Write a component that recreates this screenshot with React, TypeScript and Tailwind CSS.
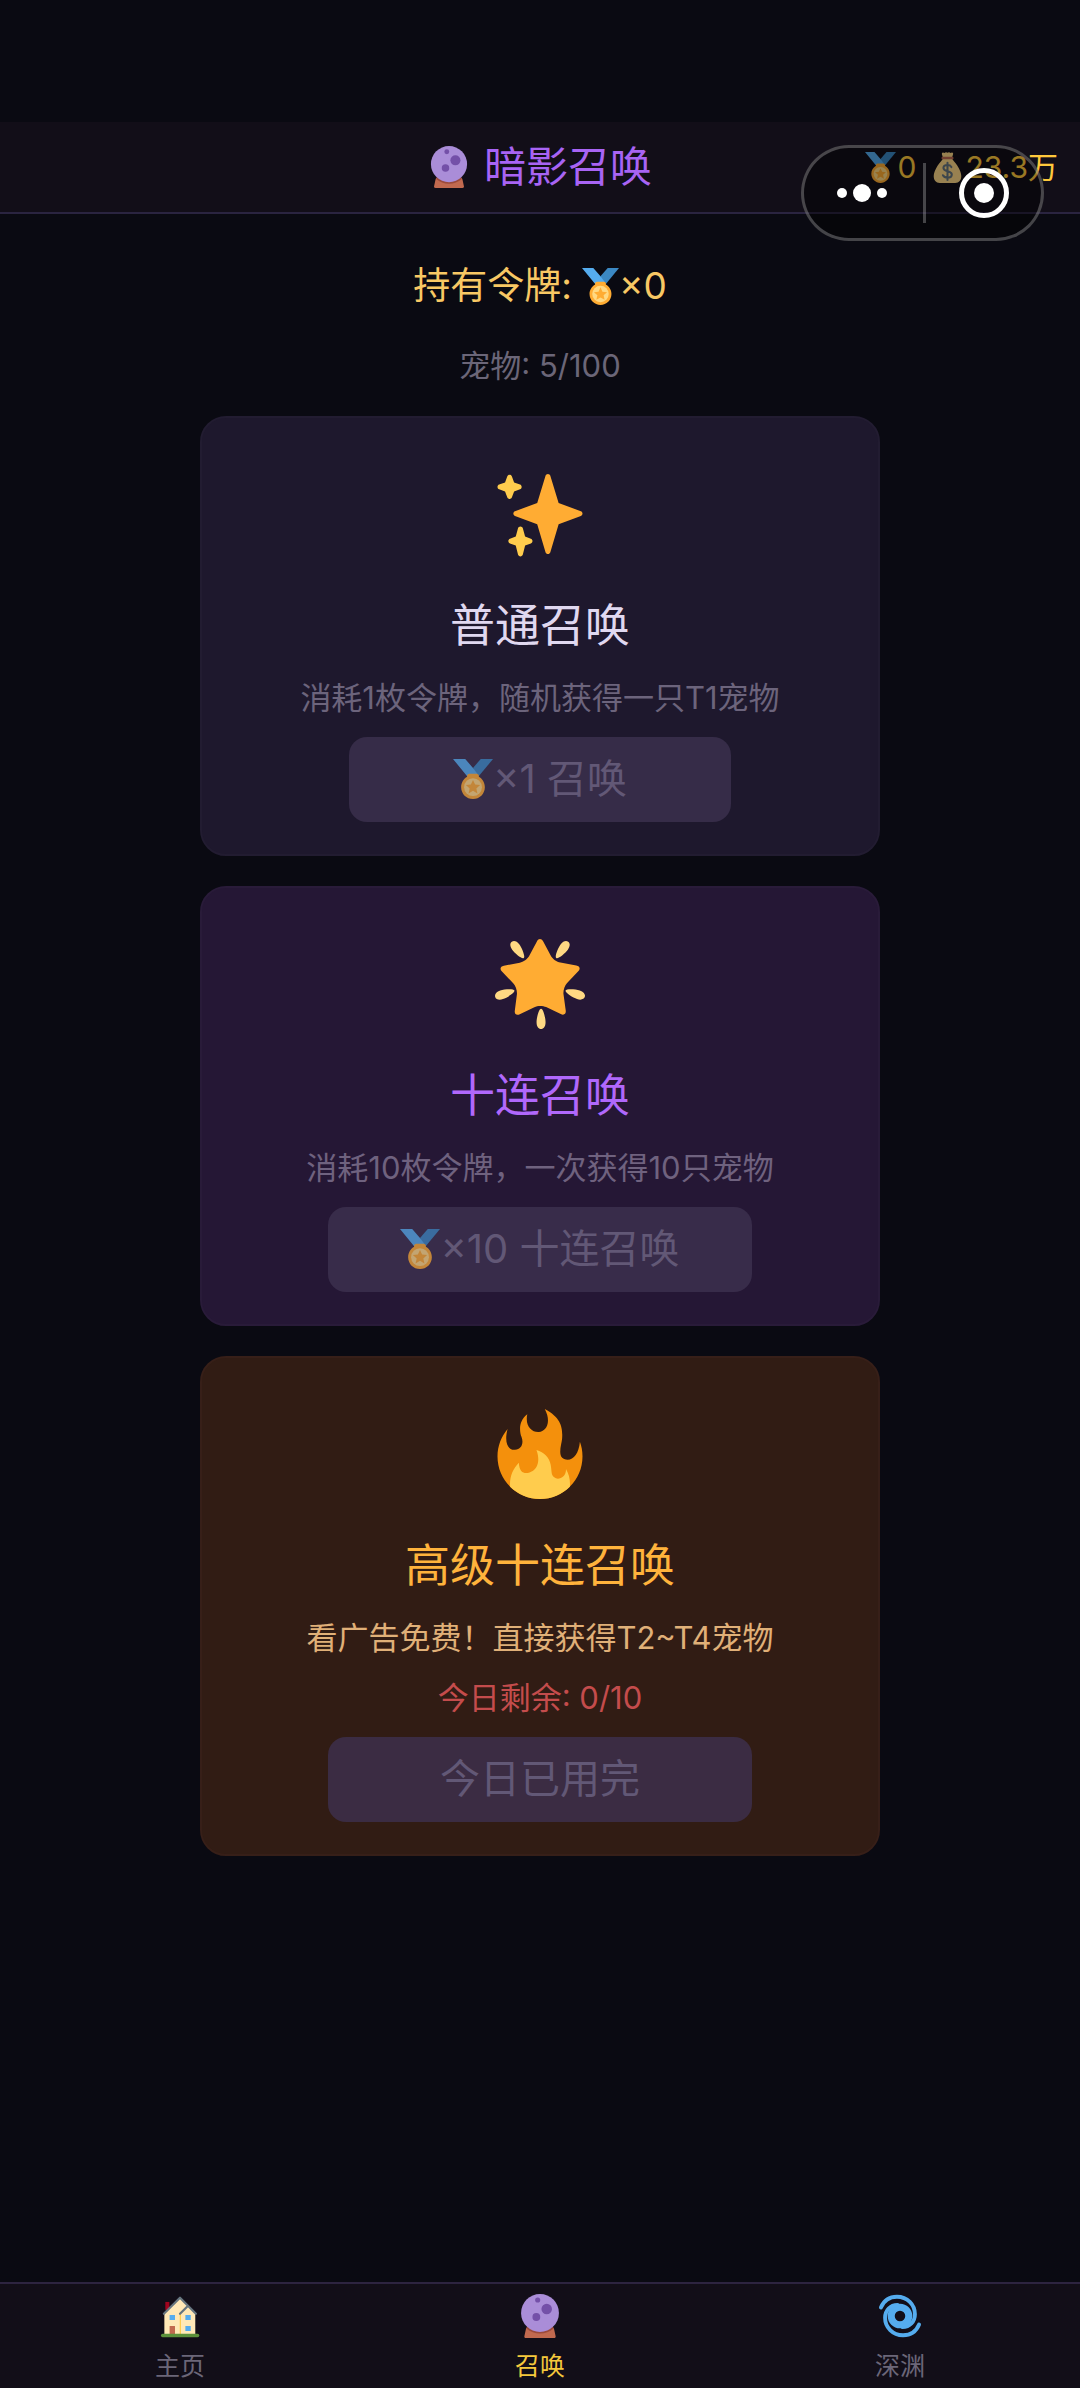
import type { ReactNode } from "react";

interface IconProps {
  className?: string;
}

function CrystalBall({ className }: IconProps) {
  return (
    <svg viewBox="0 0 36 36" className={className} aria-hidden="true">
      <path fill="#C1694F" d="M8 27h20c1 0 1.300 1 1.600 2l1.200 5.500c.2.900-.3 1.500-1.300 1.500h-23c-1 0-1.500-.6-1.300-1.500L6.400 29c.3-1 .6-2 1.600-2z" />
      <path fill="#9B4A3C" d="M7 28.200C10 31 14 32.300 18 32.300s8-1.300 11-4.100L28 26H8z" />
      <circle fill="#AA8DD8" cx="18" cy="15.500" r="15.500" />
      <circle fill="#7450A8" cx="23.500" cy="12.300" r="4.300" />
      <circle fill="#7450A8" cx="15" cy="18.800" r="3.200" />
      <circle fill="#7450A8" cx="16.100" cy="4.900" r="2.100" />
    </svg>
  );
}

function Medal({ className }: IconProps) {
  return (
    <svg viewBox="0 0 36 36" className={className} aria-hidden="true">
      <path fill="#55ACEE" d="M18 8l-7-8H0l14 17 11.521-4.750z" />
      <path fill="#3B88C3" d="M25 0l-7 8 5.390 7.312 1.227-1.489L36 0z" />
      <path fill="#FFAC33" d="M23.205 16.026c.08-.217.131-.448.131-.693 0-1.104-.896-2-2-2h-6.667c-1.105 0-2 .896-2 2 0 .245.05.476.131.693-3.258 1.826-5.464 5.307-5.464 9.307C7.336 31.224 12.111 36 18 36s10.664-4.776 10.664-10.667c0-4-2.206-7.481-5.459-9.307z" />
      <circle fill="#FFD983" cx="18" cy="25.333" r="8" />
      <path fill="#FFAC33" d="M18 18.800l1.900 4.200 4.500.5-3.400 3 1 4.500-4-2.400-4 2.400 1-4.500-3.400-3 4.500-.5z" />
    </svg>
  );
}

function MoneyBag({ className }: IconProps) {
  return (
    <svg viewBox="0 0 36 36" className={className} aria-hidden="true">
      <path fill="#FDD888" d="M12.500 8h11c2.500 3.500 5.500 6.500 7.500 10.500 1.300 2.600 3 6 3 9.500 0 5-2.500 8-7 8H9c-4.500 0-7-3-7-8 0-3.500 1.700-6.900 3-9.500C7 14.500 10 11.500 12.500 8z" />
      <path fill="#FDD888" d="M11.500 1.500C12 0 13.500.5 14.500 1.200 15.500 0 17 0 18 1c1-1 2.500-1 3.500.2 1-.7 2.500-1.200 3 .3.300 1.500-1 4-1.500 5.500H13c-.5-1.500-1.800-4-1.500-5.500z" />
      <path fill="#BF6952" d="M12.500 5.500h11c1 0 1.500.7 1.500 1.500s-.5 1.500-1.500 1.500h-11C11.500 8.500 11 7.800 11 7s.5-1.500 1.500-1.500z" />
      <path fill="none" stroke="#67757F" strokeWidth="2.400" strokeLinecap="round" d="M22.500 17.500c-1-1.700-2.700-2.300-4.500-2.300-2.600 0-4.700 1.200-4.700 3.500 0 5 9.700 2.200 9.700 7.300 0 2.500-2.300 3.700-5 3.700-2.300 0-4.300-.8-5.300-2.700M18 12.500v20" />
    </svg>
  );
}

function Sparkles({ className }: IconProps) {
  return (
    <svg viewBox="0 0 36 36" className={className} aria-hidden="true">
      <path fill="#FFAC33" d="M34.347 16.893l-8.899-3.294-3.323-10.891c-.128-.42-.517-.708-.956-.708-.439 0-.828.288-.956.708l-3.322 10.891-8.900 3.294c-.393.146-.653.519-.653.938 0 .418.26.793.653.938l8.895 3.293 3.324 11.223c.126.424.516.715.959.715.442 0 .833-.291.959-.716l3.324-11.223 8.896-3.293c.391-.144.652-.518.652-.937 0-.418-.261-.792-.653-.938z" />
      <path fill="#FFCC4D" d="M14.347 27.894l-2.314-.856-.9-3.300c-.118-.436-.513-.738-.964-.738-.451 0-.846.302-.965.737l-.9 3.300-2.313.856c-.393.145-.653.52-.653.938 0 .418.26.793.653.938l2.301.853.907 3.622c.112.444.511.756.97.756.459 0 .858-.312.97-.757l.907-3.622 2.301-.853c.393-.144.653-.519.653-.937 0-.418-.26-.793-.653-.937zM10.009 6.231l-2.364-.875-.876-2.365c-.145-.393-.519-.653-.938-.653-.418 0-.792.26-.938.653l-.875 2.365-2.365.875c-.393.146-.653.52-.653.938 0 .418.26.793.653.938l2.365.875.875 2.365c.146.393.52.653.938.653.418 0 .792-.26.938-.653l.876-2.365 2.364-.875c.393-.146.653-.52.653-.938 0-.418-.26-.792-.653-.938z" />
    </svg>
  );
}

function GlowingStar({ className }: IconProps) {
  return (
    <svg viewBox="0 0 36 36" className={className} aria-hidden="true">
      <path fill="#FFAC33" d="M28.840 17.638c-.987 1.044-1.633 3.067-1.438 4.493l.892 6.441c.197 1.427-.701 2.087-1.996 1.469l-5.851-2.796c-1.295-.62-3.408-.611-4.700.018l-5.826 2.842c-1.291.629-2.193-.026-2.007-1.452l.843-6.449c.186-1.427-.475-3.444-1.470-4.481l-4.494-4.688c-.996-1.037-.655-2.102.755-2.365l6.370-1.188c1.410-.263 3.116-1.518 3.793-2.789L16.762.956c.675-1.271 1.789-1.274 2.473-.009L22.330 6.660c.686 1.265 2.400 2.507 3.814 2.758l6.378 1.141c1.412.252 1.761 1.314.774 2.359l-4.456 4.720z" />
      <path fill="#FFD983" d="M9.783 2.181c1.023 1.413 2.446 4.917 1.717 5.447-.728.531-3.607-1.910-4.630-3.323-1.022-1.413-.935-2.668-.131-3.254.804-.587 2.020-.282 3.044 1.130zm19.348 2.124C28.109 5.718 25.230 8.160 24.500 7.627c-.729-.53.695-4.033 1.719-5.445C27.242.768 28.457.463 29.262 1.051c.803.586.89 1.841-.131 3.254zM16.625 33.291c-.001-1.746.898-5.421 1.801-5.421.899 0 1.798 3.675 1.797 5.420 0 1.747-.804 2.712-1.800 2.710-.994.002-1.798-.962-1.798-2.709zm16.179-9.262c-1.655-.539-4.858-2.533-4.579-3.395.277-.858 4.037-.581 5.690-.041 1.655.54 2.321 1.605 2.013 2.556-.308.95-1.469 1.420-3.124.88zM2.083 20.594c1.655-.54 5.414-.817 5.694.044.276.857-2.928 2.854-4.581 3.392-1.654.54-2.818.07-3.123-.88-.308-.95.354-2.015 2.010-2.556z" />
    </svg>
  );
}

function Fire({ className }: IconProps) {
  return (
    <svg viewBox="0 0 36 36" className={className} aria-hidden="true">
      <path fill="#F4900C" d="M35 19c0-2.062-.367-4.039-1.040-5.868-.46 5.389-3.333 8.157-6.335 6.868-2.812-1.208-.917-5.917-.777-8.164.236-3.809-.012-8.169-6.931-11.794 2.875 5.500.333 8.917-2.333 9.125-2.958.231-5.667-2.542-4.667-7.042-3.238 2.386-3.332 6.402-2.333 9 1.042 2.708-.042 4.958-2.583 5.208-2.840.28-4.418-3.041-2.963-8.333C2.520 10.965 1 14.805 1 19c0 9.389 7.611 17 17 17s17-7.611 17-17z" />
      <path fill="#FFCC4D" d="M28.394 23.999c.148 3.084-2.561 4.293-4.019 3.709-2.106-.843-1.541-2.291-2.083-5.291s-2.625-5.083-5.708-6c2.250 6.333-1.247 8.667-3.080 9.084-1.872.426-3.753-.001-3.968-4.007C7.352 23.668 6 26.676 6 30c0 .368.023.73.055 1.090C9.125 34.124 13.342 36 18 36s8.875-1.876 11.945-4.910c.032-.36.055-.722.055-1.090 0-2.187-.584-4.236-1.606-6.001z" />
    </svg>
  );
}

function House({ className }: IconProps) {
  return (
    <svg viewBox="0 0 36 36" className={className} aria-hidden="true">
      <path fill="#A0041E" d="M6 6.500h3.300V13H6z" />
      <path fill="#FFE8B6" d="M5.200 16L18 3l12.500 13v17H5.200z" />
      <path fill="#FFCC4D" d="M17.800 16h1v17h-1z" />
      <path fill="none" stroke="#66757F" strokeWidth="1.800" strokeLinecap="round" strokeLinejoin="round" d="M4.800 16.200L18 3l13 13.200M18 16.200l6.200-6.200" />
      <path fill="#55ACEE" d="M9.500 17.200h4.400v4.100H9.500zM22.400 17.200h4.400v4.100h-4.400zM22.400 26.200h4.400v4.100h-4.400z" />
      <path fill="#C1694F" d="M9.500 26.200h4.400v6.600H9.500z" />
      <rect fill="#5C913B" x="2.400" y="32.500" width="31.400" height="2.800" rx="1.400" />
    </svg>
  );
}

function Cyclone({ className }: IconProps) {
  return (
    <svg viewBox="0 0 36 36" className={className} aria-hidden="true">
      <g fill="none" stroke="#55ACEE">
        <circle cx="18" cy="18" r="7.200" strokeWidth="5.800" />
        <path strokeWidth="3.200" strokeLinecap="round" d="M2.400 11C4.800 5.200 9.500 2.200 15.500 2.200c8.500 0 14.700 6.500 14.700 14.300 0 6-4.200 10.500-10.200 10.500" />
        <path strokeWidth="3.200" strokeLinecap="round" d="M33.600 25C31.200 30.800 26.500 33.800 20.500 33.800 12 33.800 5.800 27.300 5.800 19.500 5.800 13.500 10 9 16 9" />
      </g>
    </svg>
  );
}

interface SummonCardProps {
  icon: ReactNode;
  title: string;
  summary: string;
  remaining?: string;
  cardClass: string;
  titleClass: string;
  summaryClass: string;
  buttonClass: string;
  children: ReactNode;
}

function SummonCard({ icon, title, summary, remaining, cardClass, titleClass, summaryClass, buttonClass, children }: SummonCardProps) {
  return (
    <article className={`flex w-full flex-col items-center rounded-[26px] border-2 pt-[51px] pb-8 ${cardClass}`}>
      {icon}
      <h2 className={`mt-[37px] text-[45px] leading-[60px] ${titleClass}`}>{title}</h2>
      <p className={`mt-[22px] text-[31px] leading-10 ${summaryClass}`}>{summary}</p>
      {remaining && <p className="mt-5 text-[31px] leading-10 text-[#c44c4c]">{remaining}</p>}
      <button
        type="button"
        disabled
        className={`mt-[19px] flex h-[85px] items-center justify-center rounded-[18px] pb-0.5 text-[40px] leading-[60px] text-[#625876] ${buttonClass}`}
      >
        {children}
      </button>
    </article>
  );
}

const tabs = [
  { label: "主页", Icon: House, active: false },
  { label: "召唤", Icon: CrystalBall, active: true },
  { label: "深渊", Icon: Cyclone, active: false },
];

export default function App() {
  return (
    <div className="relative flex min-h-screen flex-col bg-[#0a0a12] pt-[122px] font-[Inter,'Noto_Sans_CJK_SC',sans-serif]">
      <header className="grid h-[92px] grid-cols-[1fr_auto_1fr] items-center border-b-2 border-[#2a2440] bg-[#120e18]">
        <span />
        <h1 className="flex items-center text-[42px] leading-[60px] text-[#a864f4]">
          <CrystalBall className="mr-3.5 size-[42px]" />
          暗影召唤
        </h1>
        <div className="flex items-center justify-end pr-[22px] text-[30px] leading-10 text-[#ffc83c]">
          <Medal className="mr-0.5 size-[31px]" />
          <span className="mr-4">0</span>
          <MoneyBag className="mr-0.5 size-[31px]" />
          <span>23.3万</span>
        </div>
      </header>

      {/* host app capsule, floats over the header */}
      <div className="absolute top-[145px] right-9 flex h-24 w-[243px] items-center rounded-full border-3 border-white/25 bg-black/40">
        <button type="button" aria-label="更多" className="flex flex-1 items-center justify-center gap-1.5 pr-1">
          <span className="size-2.5 rounded-full bg-white" />
          <span className="size-[18px] rounded-full bg-white" />
          <span className="size-2.5 rounded-full bg-white" />
        </button>
        <span className="h-15 w-[3px] bg-white/25" />
        <button type="button" aria-label="关闭" className="flex flex-1 items-center justify-center">
          <span className="flex size-[50px] items-center justify-center rounded-full border-5 border-white">
            <span className="size-5 rounded-full bg-white" />
          </span>
        </button>
      </div>

      <main className="mx-auto flex w-[63%] flex-1 flex-col items-center pt-[47px]">
        <p className="flex items-center text-[37px] leading-[50px] text-[#f8c864]">
          <span className="mr-2.5">持有令牌:</span>
          <Medal className="size-[37px]" />
          ×0
        </p>
        <p className="mt-[35px] text-[31px] leading-10 text-[#6b6678]">宠物: 5/100</p>

        <section className="mt-[30px] flex w-full flex-col gap-[30px]">
          <SummonCard
            icon={<Sparkles className="size-[90px]" />}
            title="普通召唤"
            summary="消耗1枚令牌，随机获得一只T1宠物"
            cardClass="border-[#221c31] bg-[#1e182d]"
            titleClass="text-[#e0d8f0]"
            summaryClass="text-[#6c647c]"
            buttonClass="w-[382px] bg-[#362c48]"
          >
            <Medal className="size-10 opacity-70" />
            ×1 召唤
          </SummonCard>
          <SummonCard
            icon={<GlowingStar className="size-[90px]" />}
            title="十连召唤"
            summary="消耗10枚令牌，一次获得10只宠物"
            cardClass="border-[#291b39] bg-[#251735]"
            titleClass="text-[#b068fc]"
            summaryClass="text-[#6f627f]"
            buttonClass="w-[424px] bg-[#382c4a]"
          >
            <Medal className="size-10 opacity-70" />
            ×10 十连召唤
          </SummonCard>
          <SummonCard
            icon={<Fire className="size-[90px]" />}
            title="高级十连召唤"
            summary="看广告免费！直接获得T2~T4宠物"
            remaining="今日剩余: 0/10"
            cardClass="border-[#371f18] bg-[#311c14]"
            titleClass="text-[#ffb33c]"
            summaryClass="text-[#e0b078]"
            buttonClass="w-[424px] bg-[#3b2c43]"
          >
            今日已用完
          </SummonCard>
        </section>
      </main>

      <nav className="grid h-[106px] grid-cols-3 border-t-2 border-[#2d2440] bg-[#120e18]">
        {tabs.map(({ label, Icon, active }) => (
          <a key={label} href="#" className={`flex flex-col items-center pt-2.5 ${active ? "text-[#f5c83c]" : "text-[#6b6678]"}`}>
            <Icon className="size-11" />
            <span className="mt-3 text-[25px] leading-8">{label}</span>
          </a>
        ))}
      </nav>
    </div>
  );
}
